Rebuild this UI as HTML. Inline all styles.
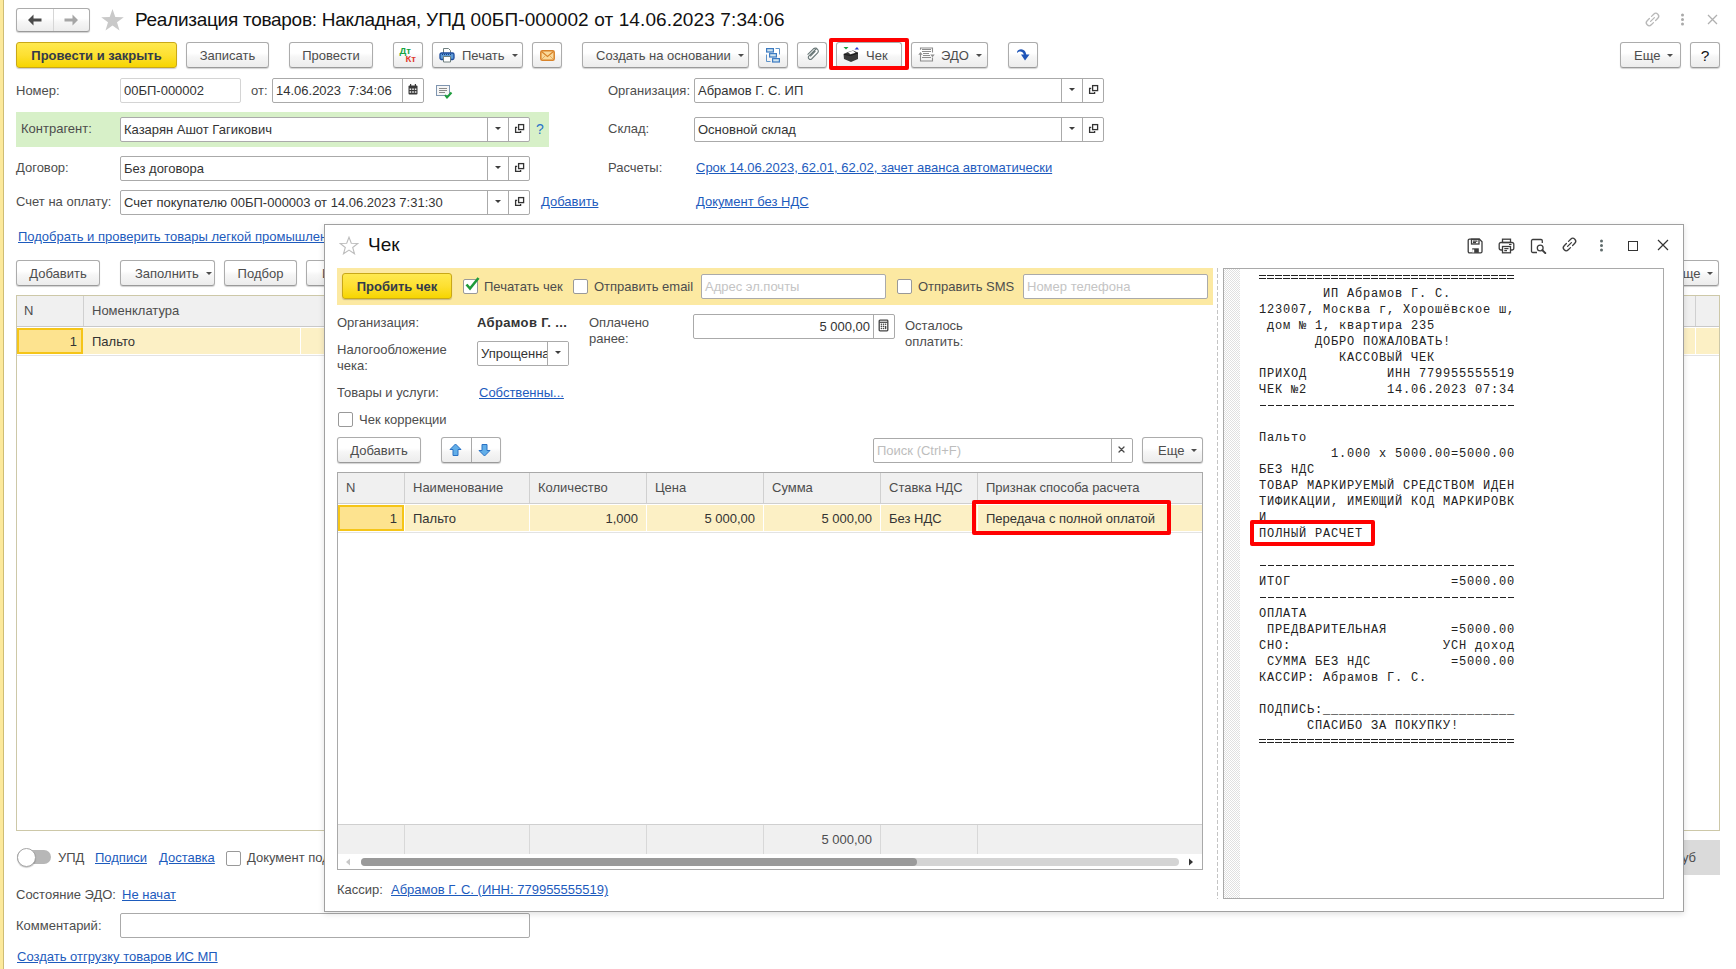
<!DOCTYPE html>
<html><head><meta charset="utf-8">
<style>
*{box-sizing:border-box}
html,body{margin:0;padding:0}
body{width:1736px;height:969px;position:relative;overflow:hidden;background:#fff;font-family:"Liberation Sans",sans-serif;font-size:13px;color:#4d4d4d}
.a{position:absolute}
.t{position:absolute;white-space:nowrap;line-height:16px}
.btn{position:absolute;height:26px;border:1px solid #acacac;border-bottom-color:#9a9a9a;border-radius:3px;background:linear-gradient(#fff 0%,#fff 42%,#f6f6f6 58%,#ececec 100%);box-shadow:0 1px 1px rgba(0,0,0,.18);text-align:center;line-height:26px;color:#4d4d4d;white-space:nowrap}
.ybtn{position:absolute;height:26px;border:1px solid #c9a818;border-radius:3px;background:linear-gradient(#ffe94f 0%,#fde032 50%,#f6d500 100%);box-shadow:0 1px 1px rgba(0,0,0,.2);text-align:center;line-height:26px;color:#333a4a;font-weight:bold;white-space:nowrap}
.inp{position:absolute;height:25px;border:1px solid #aaa;border-radius:2px;background:#fff;line-height:23px;padding-left:3px;color:#333;white-space:nowrap;overflow:hidden}
.lnk{color:#1d5bbd;text-decoration:underline}
.dd{position:absolute;top:0;bottom:0;width:21px;border-left:1px solid #aaa}
.dd:after{content:"";position:absolute;left:7px;top:9px;border-left:3px solid transparent;border-right:3px solid transparent;border-top:3.5px solid #3d3d3d}
.caret{display:inline-block;width:0;height:0;border-left:3px solid transparent;border-right:3px solid transparent;border-top:3px solid #4d4d4d;vertical-align:middle;margin-left:7px;position:relative;top:-1px}
.cb{position:absolute;width:15px;height:15px;border:1px solid #999;border-radius:2px;background:#fff}
</style></head><body>

<!-- left yellow strip -->
<div class="a" style="left:0;top:0;width:3px;height:969px;background:#fce99c"></div>
<div class="a" style="left:3px;top:0;width:1px;height:969px;background:#cfbd74"></div>

<!-- MAIN FORM -->
<!-- nav -->
<div class="btn" style="left:16px;top:8px;width:74px;height:24px;border-radius:3px"></div>
<div class="a" style="left:53px;top:9px;width:1px;height:22px;background:#d6d6d6"></div>
<svg class="a" style="left:27px;top:14px" width="16" height="12" viewBox="0 0 16 12"><path d="M1 6 L6.5 0.5 L6.5 4.5 L14.5 4.5 L14.5 7.5 L6.5 7.5 L6.5 11.5 Z" fill="#4a4a4a"/></svg>
<svg class="a" style="left:63px;top:14px" width="16" height="12" viewBox="0 0 16 12"><path d="M15 6 L9.5 0.5 L9.5 4.5 L1.5 4.5 L1.5 7.5 L9.5 7.5 L9.5 11.5 Z" fill="#a6a6a6"/></svg>
<svg class="a" style="left:100px;top:8px" width="25" height="24" viewBox="0 0 25 24"><path d="M12.5 1 L15.3 9 L23.8 9.2 L17 14.3 L19.5 22.5 L12.5 17.6 L5.5 22.5 L8 14.3 L1.2 9.2 L9.7 9 Z" fill="#c9c9c9"/></svg>
<div class="t" style="left:135px;top:9px;font-size:19px;line-height:22px;color:#111"><span style="letter-spacing:-0.28px">Реализация товаров: Накладная, </span><span style="letter-spacing:0.12px">УПД 00БП-000002 от 14.06.2023 7:34:06</span></div>

<!-- top right icons -->
<svg class="a" style="left:1644px;top:11px" width="17" height="17" viewBox="0 0 17 17"><g fill="none" stroke="#b8b8b8" stroke-width="1.3" stroke-linecap="round" transform="rotate(-45 8.5 8.5)"><path d="M7 5.6 H3.9 a2.9 2.9 0 0 0 0 5.8 H7"/><path d="M10 5.6 H13.1 a2.9 2.9 0 0 1 0 5.8 H10"/><path d="M5.8 8.5 H11.2"/></g></svg>
<svg class="a" style="left:1680px;top:13px" width="5" height="13" viewBox="0 0 5 13"><g fill="#a9a9a9"><circle cx="2.5" cy="2" r="1.5"/><circle cx="2.5" cy="6.5" r="1.5"/><circle cx="2.5" cy="11" r="1.5"/></g></svg>
<svg class="a" style="left:1707px;top:14px" width="11" height="11" viewBox="0 0 11 11"><path d="M1 1 L10 10 M10 1 L1 10" stroke="#b0b0b0" stroke-width="1.3"/></svg>

<!-- toolbar -->
<div class="ybtn" style="left:16px;top:42px;width:161px">Провести и закрыть</div>
<div class="btn" style="left:186px;top:42px;width:83px">Записать</div>
<div class="btn" style="left:289px;top:42px;width:84px">Провести</div>
<div class="btn" style="left:393px;top:42px;width:30px"></div>
<div class="btn" style="left:432px;top:42px;width:91px;text-align:left;padding-left:29px">Печать<span class="caret"></span></div>
<div class="btn" style="left:532px;top:42px;width:30px"></div>
<div class="btn" style="left:582px;top:42px;width:167px;text-align:left;padding-left:13px">Создать на основании<span class="caret"></span></div>
<div class="btn" style="left:758px;top:42px;width:30px"></div>
<div class="btn" style="left:797px;top:42px;width:30px"></div>
<div class="btn" style="left:836px;top:42px;width:66px;text-align:left;padding-left:29px">Чек</div>
<div class="a" style="left:829px;top:38px;width:80px;height:32px;border:4px solid #f00;border-radius:2px"></div>
<div class="btn" style="left:911px;top:42px;width:77px;text-align:left;padding-left:29px">ЭДО<span class="caret"></span></div>
<div class="btn" style="left:1008px;top:42px;width:30px"></div>
<div class="btn" style="left:1620px;top:42px;width:61px;text-align:left;padding-left:13px">Еще<span class="caret"></span></div>
<div class="btn" style="left:1690px;top:42px;width:30px;color:#111;font-size:15.5px">?</div>


<!-- toolbar icons -->
<svg class="a" style="left:398px;top:45px" width="20" height="18" viewBox="0 0 20 18"><text x="1.5" y="8.5" font-family="Liberation Sans" font-weight="bold" font-size="9.5" fill="#17a441">Дт</text><text x="7.5" y="16.5" font-family="Liberation Sans" font-weight="bold" font-size="9.5" fill="#e03a2f">Кт</text></svg>
<svg class="a" style="left:439px;top:47px" width="16" height="16" viewBox="0 0 16 16"><path d="M4.5 7 V1.5 H9.5 L11.5 3.5 V7" fill="#fff" stroke="#6f7f7f" stroke-width="1"/><rect x="1" y="6" width="14" height="6.5" rx="1.5" fill="#5d9ad6" stroke="#1b4a9c" stroke-width="1.3"/><path d="M3 7.5 H13" stroke="#1b3f80" stroke-width="1" stroke-dasharray="1 1"/><path d="M4.5 9.5 H11.5 V15 H4.5 Z" fill="#fff" stroke="#6f7f7f" stroke-width="1"/></svg>
<svg class="a" style="left:540px;top:50px" width="15" height="11" viewBox="0 0 15 11"><rect x="0.8" y="0.8" width="13.4" height="9.4" rx="1.5" fill="#fad99a" stroke="#d8832a" stroke-width="1.5"/><path d="M1.5 1.5 L7.5 6.5 L13.5 1.5" fill="none" stroke="#d8832a" stroke-width="1.2"/><path d="M2 9 L5.5 5.5 M13 9 L9.5 5.5" stroke="#e0a050" stroke-width="0.8"/></svg>
<svg class="a" style="left:765px;top:47px" width="16" height="16" viewBox="0 0 16 16"><g stroke="#3c7bc2" stroke-width="1.2" fill="#cfe4ef"><rect x="1.6" y="1.6" width="6.8" height="3.4"/><rect x="4.6" y="6.6" width="6.8" height="3.4"/><rect x="7.6" y="11.6" width="6.8" height="3.4"/></g><g stroke="#5e93c9" stroke-width="1" fill="none"><path d="M5 5 V6.6 M8 10 V11.6"/><path d="M10.5 1.5 H14.5 V7.5"/><path d="M1.5 7.5 V14.5 H5.5"/></g></svg>
<svg class="a" style="left:805px;top:47px" width="15" height="15" viewBox="0 0 15 15"><path d="M12 1 L3.8 9.2 a2 2 0 0 0 2.8 2.8 L12.6 6 a3 3 0 0 0 -4.2 -4.2 L2.6 7.6 M10.4 4.2 L5.2 9.4" fill="none" stroke="#6a7878" stroke-width="1.1"/></svg>
<svg class="a" style="left:842px;top:46px" width="18" height="17" viewBox="0 0 18 17"><path d="M1.5 1 H6.5 L4 3.5 Z" fill="#16a040"/><path d="M12.5 3.5 L15 1 L17 3.5 Z" fill="#2e3fd0"/><path d="M6 6 L11 4.5 L16 6.5 L16 13 L9 16 L2 13 L1.5 8 Z" fill="#3a3a3a"/><path d="M6 6.2 L11 4.8 L13.5 6.8 L8.5 8.3 Z" fill="#fff"/><path d="M2 8.3 L8.5 9.5 L16 7" fill="none" stroke="#111" stroke-width="0.8"/></svg>
<svg class="a" style="left:918px;top:47px" width="17" height="15" viewBox="0 0 17 15"><g fill="none" stroke="#8c8c8c" stroke-width="1.1"><path d="M2.5 2.8 V1 H14.5 V5.5"/><path d="M14.5 10.5 V14 H2.5 V7"/><path d="M4 2.5 H13 M4 4.5 H13 M5 6.5 H11 M5 8.5 H12 M4 10.5 H13"/></g><path d="M0.3 7.8 L2.5 5 L4.7 7.8 Z" fill="#8c8c8c"/><path d="M12.3 7.5 L16.7 7.5 L14.5 10.3 Z" fill="#8c8c8c"/></svg>
<svg class="a" style="left:1016px;top:48px" width="15" height="14" viewBox="0 0 15 14"><path d="M1 4 C2 0.5 7.5 0 9.5 4 L10.3 6.5 L13.5 6.5 L9 12.5 L5 6.5 L7.8 6.5 C7 3.5 3.5 2.5 1.3 5 Z" fill="#1f55b8"/></svg>
<!-- field icons -->


<!-- fields -->
<div class="t" style="left:16px;top:83px">Номер:</div>
<div class="inp" style="left:120px;top:78px;width:121px;border-color:#d4d4d4">00БП-000002</div>
<div class="t" style="left:251px;top:83px">от:</div>
<div class="inp" style="left:272px;top:78px;width:152px">14.06.2023&nbsp; 7:34:06<div class="a" style="left:129px;top:0;bottom:0;border-left:1px solid #aaa;width:21px"></div></div>

<svg class="a" style="left:408px;top:84px" width="10" height="11" viewBox="0 0 10 11"><rect x="0.5" y="1.5" width="9" height="9" rx="1" fill="#3a3a3a"/><rect x="2" y="0" width="1.2" height="2.5" fill="#3a3a3a"/><rect x="6.8" y="0" width="1.2" height="2.5" fill="#3a3a3a"/><g fill="#fff"><rect x="1.6" y="4.5" width="1.6" height="1.4"/><rect x="4.2" y="4.5" width="1.6" height="1.4"/><rect x="6.8" y="4.5" width="1.6" height="1.4"/><rect x="1.6" y="7.3" width="1.6" height="1.4"/><rect x="4.2" y="7.3" width="1.6" height="1.4"/><rect x="6.8" y="7.3" width="1.6" height="1.4"/></g></svg>
<svg class="a" style="left:436px;top:85px" width="17" height="14" viewBox="0 0 17 14"><rect x="0.5" y="0.5" width="13" height="10" fill="#f6f6f6" stroke="#7f95b0" stroke-width="1"/><path d="M3 3.5 H11 M3 5.5 H11 M3 7.5 H9" stroke="#8a8a8a" stroke-width="1"/><path d="M9 10 L11 12.5 L15.5 7.5" fill="none" stroke="#1f9e3e" stroke-width="2"/></svg>
<div class="t" style="left:608px;top:83px">Организация:</div>
<div class="inp" style="left:694px;top:78px;width:410px">Абрамов Г. С. ИП<div class="dd" style="left:366px"></div><div class="a" style="left:387px;top:0;bottom:0;width:21px;border-left:1px solid #aaa"><svg class="a" style="left:5px;top:5px" width="11" height="11" viewBox="0 0 11 11"><g fill="none" stroke="#333" stroke-width="1.3"><rect x="4.6" y="1.6" width="5" height="5"/><path d="M3.2 4.4 H1.6 V9.4 H6.6 V8.1"/></g></svg></div></div>

<div class="a" style="left:16px;top:112px;width:533px;height:35px;background:#d7f0c8"></div>
<div class="t" style="left:21px;top:121px">Контрагент:</div>
<div class="inp" style="left:120px;top:117px;width:410px">Казарян Ашот Гагикович<div class="dd" style="left:366px"></div><div class="a" style="left:387px;top:0;bottom:0;width:21px;border-left:1px solid #aaa"><svg class="a" style="left:5px;top:5px" width="11" height="11" viewBox="0 0 11 11"><g fill="none" stroke="#333" stroke-width="1.3"><rect x="4.6" y="1.6" width="5" height="5"/><path d="M3.2 4.4 H1.6 V9.4 H6.6 V8.1"/></g></svg></div></div>
<div class="t" style="left:536px;top:121px;color:#2a74c9;font-size:14px">?</div>

<div class="t" style="left:608px;top:121px">Склад:</div>
<div class="inp" style="left:694px;top:117px;width:410px">Основной склад<div class="dd" style="left:366px"></div><div class="a" style="left:387px;top:0;bottom:0;width:21px;border-left:1px solid #aaa"><svg class="a" style="left:5px;top:5px" width="11" height="11" viewBox="0 0 11 11"><g fill="none" stroke="#333" stroke-width="1.3"><rect x="4.6" y="1.6" width="5" height="5"/><path d="M3.2 4.4 H1.6 V9.4 H6.6 V8.1"/></g></svg></div></div>

<div class="t" style="left:16px;top:160px">Договор:</div>
<div class="inp" style="left:120px;top:156px;width:410px">Без договора<div class="dd" style="left:366px"></div><div class="a" style="left:387px;top:0;bottom:0;width:21px;border-left:1px solid #aaa"><svg class="a" style="left:5px;top:5px" width="11" height="11" viewBox="0 0 11 11"><g fill="none" stroke="#333" stroke-width="1.3"><rect x="4.6" y="1.6" width="5" height="5"/><path d="M3.2 4.4 H1.6 V9.4 H6.6 V8.1"/></g></svg></div></div>
<div class="t" style="left:608px;top:160px">Расчеты:</div>
<div class="t lnk" style="left:696px;top:160px">Срок 14.06.2023, 62.01, 62.02, зачет аванса автоматически</div>

<div class="t" style="left:16px;top:194px">Счет на оплату:</div>
<div class="inp" style="left:120px;top:190px;width:410px">Счет покупателю 00БП-000003 от 14.06.2023 7:31:30<div class="dd" style="left:366px"></div><div class="a" style="left:387px;top:0;bottom:0;width:21px;border-left:1px solid #aaa"><svg class="a" style="left:5px;top:5px" width="11" height="11" viewBox="0 0 11 11"><g fill="none" stroke="#333" stroke-width="1.3"><rect x="4.6" y="1.6" width="5" height="5"/><path d="M3.2 4.4 H1.6 V9.4 H6.6 V8.1"/></g></svg></div></div>
<div class="t lnk" style="left:541px;top:194px">Добавить</div>
<div class="t lnk" style="left:696px;top:194px">Документ без НДС</div>

<div class="t lnk" style="left:18px;top:229px">Подобрать и проверить товары легкой промышленности</div>

<!-- table toolbar -->
<div class="btn" style="left:16px;top:260px;width:84px">Добавить</div>
<div class="btn" style="left:120px;top:260px;width:95px;text-align:left;padding-left:14px">Заполнить<span class="caret"></span></div>
<div class="btn" style="left:224px;top:260px;width:73px">Подбор</div>
<div class="btn" style="left:306px;top:260px;width:90px;text-align:left;padding-left:15px">Изменить</div>
<div class="btn" style="left:1659px;top:260px;width:60px;text-align:left;padding-left:14px">Еще<span class="caret"></span></div>

<!-- main table -->
<div class="a" style="left:16px;top:295px;width:1704px;height:536px;border:1px solid #cdc8a8;background:#fff"></div>
<div class="a" style="left:17px;top:296px;width:1702px;height:31px;background:#f0f0f0;border-bottom:1px solid #c9c9c9"></div>
<div class="a" style="left:83px;top:296px;width:1px;height:30px;background:#d0d0d0"></div>
<div class="t" style="left:24px;top:303px">N</div>
<div class="t" style="left:92px;top:303px">Номенклатура</div>
<div class="a" style="left:17px;top:328px;width:1702px;height:26px;background:#fcf0c5"></div>
<div class="a" style="left:17px;top:355px;width:1702px;height:1px;background:#e3e3e3"></div>
<div class="a" style="left:17px;top:328px;width:66px;height:26px;background:#fde38f;border:2px solid #f5c518"></div>
<div class="t" style="left:17px;top:334px;width:60px;text-align:right;color:#333">1</div>
<div class="t" style="left:92px;top:334px;color:#333">Пальто</div>
<div class="a" style="left:300px;top:328px;width:1px;height:26px;background:#fff"></div>
<div class="a" style="left:1695px;top:296px;width:1px;height:30px;background:#d0d0d0"></div>
<div class="a" style="left:1695px;top:328px;width:1px;height:26px;background:#fff"></div>

<!-- bottom of main form -->
<div class="a" style="left:17px;top:850px;width:34px;height:14px;border-radius:7px;background:#b7b7b7"></div>
<div class="a" style="left:17px;top:848px;width:19px;height:19px;border-radius:50%;background:#fff;border:1px solid #a5a5a5;box-shadow:0 1px 1px rgba(0,0,0,.2)"></div>
<div class="t" style="left:58px;top:850px">УПД</div>
<div class="t lnk" style="left:95px;top:850px">Подписи</div>
<div class="t lnk" style="left:159px;top:850px">Доставка</div>
<div class="cb" style="left:226px;top:851px"></div>
<div class="t" style="left:247px;top:850px">Документ подписан</div>
<div class="a" style="left:1500px;top:840px;width:220px;height:35px;background:#dadada"></div>
<div class="t" style="left:1500px;top:850px;width:196px;text-align:right">Всего: 5 000,00 руб</div>

<div class="t" style="left:16px;top:887px">Состояние ЭДО:</div>
<div class="t lnk" style="left:122px;top:887px">Не начат</div>
<div class="t" style="left:16px;top:918px">Комментарий:</div>
<div class="inp" style="left:120px;top:913px;width:410px"></div>
<div class="t lnk" style="left:17px;top:949px">Создать отгрузку товаров ИС МП</div>

<!-- DIALOG placeholder -->
<div id="dlg" class="a" style="left:324px;top:224px;width:1360px;height:688px;background:#fff;border:1px solid #a0a0a0;box-shadow:0 2px 6px rgba(0,0,0,.13)"></div>
<!-- dialog title -->
<svg class="a" style="left:339px;top:236px" width="20" height="19" viewBox="0 0 20 19"><path d="M10 1.2 L12.3 7.3 L18.8 7.5 L13.7 11.5 L15.5 17.8 L10 14.1 L4.5 17.8 L6.3 11.5 L1.2 7.5 L7.7 7.3 Z" fill="none" stroke="#bdbdbd" stroke-width="1.1"/></svg>
<div class="t" style="left:368px;top:234px;font-size:19px;line-height:22px;color:#111">Чек</div>
<!-- dialog header icons -->
<svg class="a" style="left:1467px;top:238px" width="17" height="16" viewBox="0 0 17 16"><g fill="none" stroke="#3d3d3d" stroke-width="1.3"><path d="M2.5 1.2 H12.5 L15 3.7 V13.5 a1.3 1.3 0 0 1 -1.3 1.3 H2.5 a1.3 1.3 0 0 1 -1.3 -1.3 V2.5 a1.3 1.3 0 0 1 1.3 -1.3 Z"/><rect x="4.5" y="1.2" width="7.5" height="4.8"/><path d="M6 3.2 H10.5 M6 4.6 H9"/></g><rect x="5.2" y="10.3" width="6.6" height="4.5" fill="#3d3d3d"/><rect x="5.2" y="11.5" width="2" height="3" fill="#fff"/></svg>
<svg class="a" style="left:1498px;top:238px" width="17" height="16" viewBox="0 0 17 16"><g fill="none" stroke="#3d3d3d" stroke-width="1.3"><rect x="4.5" y="1.2" width="8" height="3.3"/><path d="M4 12 H3 a1.8 1.8 0 0 1 -1.8 -1.8 V6.3 a1.8 1.8 0 0 1 1.8 -1.8 H14 a1.8 1.8 0 0 1 1.8 1.8 V10.2 a1.8 1.8 0 0 1 -1.8 1.8 H13"/><rect x="4.5" y="8.5" width="8" height="6.3" fill="#fff"/><path d="M6.3 10.7 H10.5 M6.3 12.6 H9"/><path d="M11 6.5 H13.5" stroke-width="1"/></g></svg>
<svg class="a" style="left:1530px;top:238px" width="17" height="16" viewBox="0 0 17 16"><g fill="none" stroke="#3d3d3d" stroke-width="1.3"><path d="M7 14.5 H2.8 a1.3 1.3 0 0 1 -1.3 -1.3 V2.8 a1.3 1.3 0 0 1 1.3 -1.3 H11 a1.3 1.3 0 0 1 1.3 1.3 V5"/><circle cx="10.2" cy="10" r="2.9"/></g><path d="M12.3 12.1 L15.3 15.1" stroke="#3d3d3d" stroke-width="2" stroke-linecap="round"/></svg>
<svg class="a" style="left:1561px;top:236px" width="17" height="17" viewBox="0 0 17 17"><g fill="none" stroke="#3d3d3d" stroke-width="1.3" stroke-linecap="round" transform="rotate(-45 8.5 8.5)"><path d="M7 5.6 H3.9 a2.9 2.9 0 0 0 0 5.8 H7"/><path d="M10 5.6 H13.1 a2.9 2.9 0 0 1 0 5.8 H10"/><path d="M5.8 8.5 H11.2"/></g></svg>
<svg class="a" style="left:1599px;top:239px" width="5" height="13" viewBox="0 0 5 13"><g fill="#5f6b6b"><circle cx="2.5" cy="2" r="1.5"/><circle cx="2.5" cy="6.5" r="1.5"/><circle cx="2.5" cy="11" r="1.5"/></g></svg>
<div class="a" style="left:1628px;top:241px;width:10px;height:10px;border:1.3px solid #333"></div>
<svg class="a" style="left:1657px;top:239px" width="12" height="12" viewBox="0 0 12 12"><path d="M1 1 L11 11 M11 1 L1 11" stroke="#333" stroke-width="1.2"/></svg>

<!-- yellow bar -->
<div class="a" style="left:337px;top:268px;width:876px;height:37px;background:#fce9a2"></div>
<div class="ybtn" style="left:342px;top:273px;width:110px">Пробить чек</div>
<div class="cb" style="left:463px;top:279px"></div>
<svg class="a" style="left:464px;top:276px" width="16" height="16" viewBox="0 0 16 16"><path d="M2.5 8.5 L6 12.5 L14.5 2" fill="none" stroke="#1e9b3a" stroke-width="2.6"/></svg>
<div class="t" style="left:484px;top:279px">Печатать чек</div>
<div class="cb" style="left:573px;top:279px"></div>
<div class="t" style="left:594px;top:279px">Отправить email</div>
<div class="inp" style="left:701px;top:274px;width:185px;height:25px;color:#c4c4c4">Адрес эл.почты</div>
<div class="cb" style="left:897px;top:279px"></div>
<div class="t" style="left:918px;top:279px">Отправить SMS</div>
<div class="inp" style="left:1023px;top:274px;width:185px;height:25px;color:#c4c4c4">Номер телефона</div>

<!-- dialog fields -->
<div class="t" style="left:337px;top:315px">Организация:</div>
<div class="t" style="left:477px;top:315px;font-weight:bold;color:#333;letter-spacing:0.35px">Абрамов Г. ...</div>
<div class="t" style="left:589px;top:315px">Оплачено</div>
<div class="t" style="left:589px;top:331px">ранее:</div>
<div class="inp" style="left:693px;top:314px;width:202px;text-align:right;padding-right:24px">5 000,00<div class="a" style="left:179px;top:0;bottom:0;width:21px;border-left:1px solid #aaa"></div></div>
<svg class="a" style="left:878px;top:319px" width="11" height="13" viewBox="0 0 11 13"><rect x="1.2" y="1.2" width="8.6" height="10.6" rx="0.8" fill="none" stroke="#444" stroke-width="1.3"/><path d="M1.5 3.3 H9.5" stroke="#444" stroke-width="1.2"/><g fill="#444"><circle cx="3.4" cy="5.3" r="0.8"/><circle cx="5.5" cy="5.3" r="0.8"/><circle cx="7.6" cy="5.3" r="0.8"/><circle cx="3.4" cy="7.4" r="0.8"/><circle cx="5.5" cy="7.4" r="0.8"/><circle cx="3.4" cy="9.5" r="0.8"/><circle cx="5.5" cy="9.5" r="0.8"/><rect x="6.9" y="6.8" width="1.4" height="3.4" rx="0.7"/></g></svg>
<div class="t" style="left:905px;top:318px">Осталось</div>
<div class="t" style="left:905px;top:334px">оплатить:</div>
<div class="t" style="left:337px;top:342px">Налогообложение</div>
<div class="t" style="left:337px;top:358px">чека:</div>
<div class="inp" style="left:477px;top:341px;width:92px">Упрощенна<div class="dd" style="left:69px;background:#fff"></div></div>
<div class="t" style="left:337px;top:385px">Товары и услуги:</div>
<div class="t lnk" style="left:479px;top:385px">Собственны...</div>
<div class="cb" style="left:338px;top:412px"></div>
<div class="t" style="left:359px;top:412px">Чек коррекции</div>
<div class="btn" style="left:337px;top:437px;width:84px">Добавить</div>
<div class="btn" style="left:441px;top:437px;width:60px"></div>
<div class="a" style="left:471px;top:438px;width:1px;height:24px;background:#a9a9a9"></div>
<svg class="a" style="left:449px;top:443px" width="13" height="14" viewBox="0 0 13 14"><path d="M6.5 1 L12 6.5 L9 6.5 L9 12.5 L4 12.5 L4 6.5 L1 6.5 Z" fill="#62aee8" stroke="#2a72c4" stroke-width="1" stroke-linejoin="miter"/></svg>
<svg class="a" style="left:478px;top:443px" width="13" height="14" viewBox="0 0 13 14"><path d="M6.5 13 L12 7.5 L9 7.5 L9 1.5 L4 1.5 L4 7.5 L1 7.5 Z" fill="#62aee8" stroke="#2a72c4" stroke-width="1"/></svg>
<div class="inp" style="left:873px;top:438px;width:260px;color:#bdbdbd">Поиск (Ctrl+F)<div class="a" style="left:237px;top:0;bottom:0;width:21px;border-left:1px solid #aaa"></div></div>
<svg class="a" style="left:1118px;top:446px" width="7" height="7" viewBox="0 0 7 7"><path d="M1 1 L6 6 M6 1 L1 6" stroke="#4a4a4a" stroke-width="1.3" stroke-linecap="round"/></svg>
<div class="btn" style="left:1142px;top:437px;width:61px;text-align:left;padding-left:15px">Еще<span class="caret"></span></div>

<!-- dialog table -->
<div class="a" style="left:337px;top:472px;width:866px;height:398px;border:1px solid #a9a9a9;background:#fff"></div>
<div class="a" style="left:338px;top:473px;width:864px;height:31px;background:#f0f0f0;border-bottom:1px solid #cfcfcf"></div>
<div class="a" style="left:338px;top:505px;width:864px;height:26px;background:#fcf0c5"></div>
<div class="a" style="left:338px;top:532px;width:864px;height:1px;background:#e3e3e3"></div>
<div class="a" style="left:338px;top:505px;width:66px;height:26px;background:#fde38f;border:2px solid #f5c518"></div>
<div class="a" style="left:338px;top:824px;width:864px;height:30px;background:#f0f0f0;border-top:1px solid #cfcfcf"></div>
<div class="a" style="left:404px;top:473px;width:1px;height:30px;background:#d0d0d0"></div>
<div class="a" style="left:404px;top:825px;width:1px;height:29px;background:#d8d8d8"></div>
<div class="a" style="left:529px;top:473px;width:1px;height:30px;background:#d0d0d0"></div>
<div class="a" style="left:529px;top:825px;width:1px;height:29px;background:#d8d8d8"></div>
<div class="a" style="left:646px;top:473px;width:1px;height:30px;background:#d0d0d0"></div>
<div class="a" style="left:646px;top:825px;width:1px;height:29px;background:#d8d8d8"></div>
<div class="a" style="left:763px;top:473px;width:1px;height:30px;background:#d0d0d0"></div>
<div class="a" style="left:763px;top:825px;width:1px;height:29px;background:#d8d8d8"></div>
<div class="a" style="left:880px;top:473px;width:1px;height:30px;background:#d0d0d0"></div>
<div class="a" style="left:880px;top:825px;width:1px;height:29px;background:#d8d8d8"></div>
<div class="a" style="left:977px;top:473px;width:1px;height:30px;background:#d0d0d0"></div>
<div class="a" style="left:977px;top:825px;width:1px;height:29px;background:#d8d8d8"></div>

<div class="a" style="left:404px;top:505px;width:1px;height:26px;background:#fff"></div>
<div class="a" style="left:529px;top:505px;width:1px;height:26px;background:#fff"></div>
<div class="a" style="left:646px;top:505px;width:1px;height:26px;background:#fff"></div>
<div class="a" style="left:763px;top:505px;width:1px;height:26px;background:#fff"></div>
<div class="a" style="left:880px;top:505px;width:1px;height:26px;background:#fff"></div>
<div class="a" style="left:977px;top:505px;width:1px;height:26px;background:#fff"></div>
<div class="t" style="left:346px;top:480px">N</div>
<div class="t" style="left:413px;top:480px">Наименование</div>
<div class="t" style="left:538px;top:480px">Количество</div>
<div class="t" style="left:655px;top:480px">Цена</div>
<div class="t" style="left:772px;top:480px">Сумма</div>
<div class="t" style="left:889px;top:480px">Ставка НДС</div>
<div class="t" style="left:986px;top:480px">Признак способа расчета</div>
<div class="t" style="left:338px;top:511px;width:59px;text-align:right;color:#333">1</div>
<div class="t" style="left:413px;top:511px;color:#333">Пальто</div>
<div class="t" style="left:530px;top:511px;width:108px;text-align:right;color:#333">1,000</div>
<div class="t" style="left:647px;top:511px;width:108px;text-align:right;color:#333">5 000,00</div>
<div class="t" style="left:763px;top:511px;width:109px;text-align:right;color:#333">5 000,00</div>
<div class="t" style="left:889px;top:511px;color:#333">Без НДС</div>
<div class="t" style="left:986px;top:511px;color:#333">Передача с полной оплатой</div>
<div class="a" style="left:972px;top:500px;width:199px;height:35px;border:4px solid #f00;border-radius:2px"></div>
<div class="t" style="left:763px;top:832px;width:109px;text-align:right">5 000,00</div>
<!-- scrollbar -->
<svg class="a" style="left:345px;top:858px" width="6" height="8" viewBox="0 0 6 8"><path d="M5 0.5 L1 4 L5 7.5 Z" fill="#c8c8c8"/></svg>
<div class="a" style="left:361px;top:858px;width:818px;height:8px;border-radius:4px;background:#d4d4d4"></div>
<div class="a" style="left:361px;top:858px;width:556px;height:8px;border-radius:4px;background:#9a9a9a"></div>
<svg class="a" style="left:1188px;top:858px" width="6" height="8" viewBox="0 0 6 8"><path d="M1 0.5 L5 4 L1 7.5 Z" fill="#333"/></svg>

<div class="t" style="left:337px;top:882px">Кассир:</div>
<div class="t lnk" style="left:391px;top:882px">Абрамов Г. С. (ИНН: 779955555519)</div>

<!-- separator -->
<div class="a" style="left:1217px;top:268px;width:1px;height:631px;background:repeating-linear-gradient(#c4c4c4 0 4px,transparent 4px 6px)"></div>

<!-- receipt -->
<div class="a" style="left:1223px;top:268px;width:441px;height:631px;border:1px solid #a9a9a9;background:#fff"></div>
<div class="a" style="left:1224px;top:269px;width:16px;height:629px;background:repeating-conic-gradient(#e0e0e0 0 25%,#fff 0 50%) 0 0/2px 2px"></div>
<pre class="a" style="left:1259px;top:270px;margin:0;font-family:'Liberation Mono',monospace;font-size:12px;letter-spacing:0.8px;line-height:16px;color:#222">

        ИП Абрамов Г. С.
123007, Москва г, Хорошёвское ш,
 дом № 1, квартира 235
       ДОБРО ПОЖАЛОВАТЬ!
          КАССОВЫЙ ЧЕК
ПРИХОД          ИНН 779955555519
ЧЕК №2          14.06.2023 07:34


Пальто
         1.000 x 5000.00=5000.00
БЕЗ НДС
ТОВАР МАРКИРУЕМЫЙ СРЕДСТВОМ ИДЕН
ТИФИКАЦИИ, ИМЕЮЩИЙ КОД МАРКИРОВК
И
ПОЛНЫЙ РАСЧЕТ


ИТОГ                    =5000.00

ОПЛАТА
 ПРЕДВАРИТЕЛЬНАЯ        =5000.00
СНО:                   УСН доход
 СУММА БЕЗ НДС          =5000.00
КАССИР: Абрамов Г. С.

ПОДПИСЬ:________________________
      СПАСИБО ЗА ПОКУПКУ!
</pre>
<div class="a" style="left:1259px;top:275px;width:256px;height:1px;background:repeating-linear-gradient(90deg,#222 0 7px,transparent 7px 8px)"></div>
<div class="a" style="left:1259px;top:278px;width:256px;height:1px;background:repeating-linear-gradient(90deg,#222 0 7px,transparent 7px 8px)"></div>
<div class="a" style="left:1260px;top:405px;width:255px;height:1px;background:repeating-linear-gradient(90deg,#222 0 6px,transparent 6px 8px)"></div>
<div class="a" style="left:1260px;top:565px;width:255px;height:1px;background:repeating-linear-gradient(90deg,#222 0 6px,transparent 6px 8px)"></div>
<div class="a" style="left:1260px;top:597px;width:255px;height:1px;background:repeating-linear-gradient(90deg,#222 0 6px,transparent 6px 8px)"></div>
<div class="a" style="left:1259px;top:739px;width:256px;height:1px;background:repeating-linear-gradient(90deg,#222 0 7px,transparent 7px 8px)"></div>
<div class="a" style="left:1259px;top:742px;width:256px;height:1px;background:repeating-linear-gradient(90deg,#222 0 7px,transparent 7px 8px)"></div>

<div class="a" style="left:1250px;top:520px;width:125px;height:26px;border:4px solid #f00;border-radius:2px"></div>



</body></html>
